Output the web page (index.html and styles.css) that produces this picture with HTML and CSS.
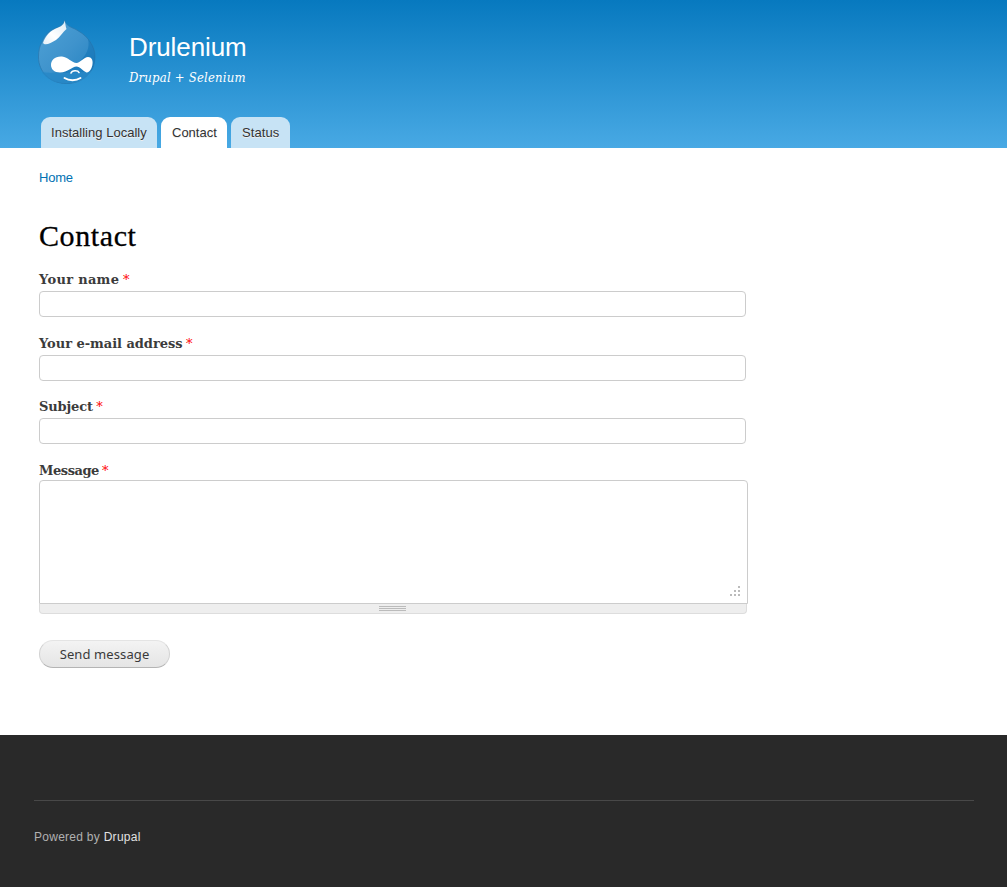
FILE: index.html
```html
<!DOCTYPE html>
<html lang="en">
<head>
<meta charset="utf-8">
<title>Contact | Drulenium</title>
<link rel="stylesheet" href="styles.css">
</head>
<body>
<header class="header">
  <div class="branding">
    <svg class="logo" width="60" height="66" viewBox="0 0 60 66" aria-label="Home">
      <defs>
        <linearGradient id="drop" x1="0" y1="0" x2="1" y2="1">
          <stop offset="0" stop-color="#4fa2d6"/>
          <stop offset=".5" stop-color="#3f93cc"/>
          <stop offset="1" stop-color="#2180c0"/>
        </linearGradient>
        <linearGradient id="shine" x1="0" y1="1" x2="1" y2="0">
          <stop offset="0" stop-color="#fff" stop-opacity=".85"/>
          <stop offset=".4" stop-color="#fff"/>
          <stop offset="1" stop-color="#fff" stop-opacity=".8"/>
        </linearGradient>
      </defs>
      <path d="M27.7 .5C29 5 33 7 38 9C43 12 47 14 51 19C56 25 58 31 58 37C58 53 45 63.5 29.5 63.5C13 63.5 1.5 52 1.5 37C1.5 31 2.5 26 5 22C8 15 12 11 17 9C23 7 26 5 27.7 .5Z" fill="url(#drop)" stroke="#2b79b0" stroke-width=".8"/>
      <path d="M51 19C56 25 58 31 58 37C58 53 45 63.5 29.5 63.5C19 63.5 10 59 5 52C20 55 33 50 42 42C50 35 53 27 51 19Z" fill="#0c70b3" opacity=".5"/>
      <path d="M4 51C10 60 19 63.5 29.5 63.5C41 63.5 50 59 55 51C45 53 15 54 4 51Z" fill="#2f92cf" opacity=".5"/>
      <path d="M27.7 .5C27 6 22 7 17 9.5C12 12 8 17 6 23C8 26 14 23 19 20C23 17 26 12 29.5 9C28.5 6 28.5 4 27.7 .5Z" fill="url(#shine)"/>
      <path d="M25 36.5C31 37 35 43 39.5 43C43 43 47 37 51 37C54.5 37 56 40 55.5 44C55 49 52 53 49.5 52.5C46 51 43 46.500 39.5 46.5C35 46.5 31 52.5 23 52.5C17 52.5 14 49 14 45C14 40 18 36 25 36.5Z" fill="#fff"/>
      <path d="M34 53C35 50 41 50 42 52.5" fill="none" stroke="#fff" stroke-width="1.6" stroke-linecap="round"/>
      <path d="M27.5 58C32 61 39 61 43.5 58" fill="none" stroke="#fff" stroke-width="1.9" stroke-linecap="round"/>
    </svg>
    <div class="titles">
      <div class="site-name">Drulenium</div>
      <div class="slogan">Drupal + Selenium</div>
    </div>
  </div>
  <nav class="tabs">
    <a class="tab tab-install">Installing Locally</a>
    <a class="tab tab-contact active">Contact</a>
    <a class="tab tab-status">Status</a>
  </nav>
</header>
<main class="main">
  <div class="breadcrumb"><a>Home</a></div>
  <h1 class="title">Contact</h1>
  <form class="form">
    <div class="field"><label class="label l-name">Your name <span class="req">*</span></label><input class="input" type="text"></div>
    <div class="field short"><label class="label l-mail">Your e-mail address <span class="req">*</span></label><input class="input" type="text"></div>
    <div class="field"><label class="label l-subject">Subject <span class="req">*</span></label><input class="input" type="text"></div>
    <div class="message"><label class="label l-message">Message <span class="req">*</span></label>
      <div class="area">
        <svg width="10" height="10" viewBox="0 0 10 10" fill="#bbb"><path d="M8 0h2v2h-2zM4 4h2v2h-2zM8 4h2v2h-2zM0 8h2v2h-2zM4 8h2v2h-2zM8 8h2v2h-2z"/></svg>
      </div>
      <div class="grippie">
        <svg width="27" height="5" viewBox="0 0 27 5" fill="#bbb"><path d="M0 0h27v1h-27zM0 2h27v1h-27zM0 4h27v1h-27z"/></svg>
      </div>
    </div>
    <button class="button" type="button">Send message</button>
  </form>
</main>
<footer class="footer">
  <div class="footer-inner">Powered by <a>Drupal</a></div>
</footer>
</body>
</html>
```
FILE: styles.css
```css
* { box-sizing: border-box; }
body { margin: 0; width: 1007px; height: 887px; overflow: hidden; background: #fff; display: flex; flex-direction: column; font-family: "Liberation Sans", Arial, sans-serif; color: #3b3b3b; }
.header { height: 148px; flex: none; padding: 20px 0 0 37px; background: linear-gradient(#0779bf, #48a9e4); display: flex; flex-direction: column; justify-content: space-between; }
.branding { display: flex; }
.logo { flex: none; }
.titles { padding: 11px 0 0 32px; color: #fff; }
.site-name { font-size: 26px; line-height: 32px; letter-spacing: -.1px; }
.slogan { margin-top: 5px; font: italic 13px/20px "DejaVu Serif Condensed", "DejaVu Serif", serif; font-stretch: condensed; letter-spacing: .2px; white-space: nowrap; }
.tabs { display: flex; gap: 4px; padding-left: 4px; }
.tab { height: 31px; padding-left: 10px; border-radius: 9px 9px 0 0; background: #c7e3f5; color: #333; font-size: 13px; line-height: 31px; text-shadow: 0 1px #eee; white-space: nowrap; }
.tab-install { width: 116px; letter-spacing: .02px; }
.tab-contact { width: 66px; padding-left: 11px; }
.tab-status { width: 59px; padding-left: 11px; letter-spacing: .1px; }
.tab.active { background: #fff; }
.main { height: 587px; flex: none; padding: 20px 0 0 39px; }
.breadcrumb { font-size: 13px; line-height: 20px; letter-spacing: -.2px; color: #0071b3; }
.title { margin: 30px 0 0; font: 30px/36px "Liberation Serif", serif; letter-spacing: .6px; color: #000; -webkit-text-stroke: .3px #000; }
.form { margin-top: 16px; }
.field { height: 64px; }
.field.short { height: 63px; }
.label { display: block; height: 21px; font: bold 13px/20px "DejaVu Serif", serif; white-space: nowrap; }
.l-name { letter-spacing: .3px; }
.l-mail { letter-spacing: -.04px; }
.l-subject { letter-spacing: -.15px; }
.l-message { height: 19px; letter-spacing: -.45px; }
.req { color: #f00; font-weight: normal; margin-left: -1px; }
.input { display: block; width: 707px; height: 26px; margin: 0; border: 1px solid #ccc; border-radius: 4px; padding: 4px; background: #fff; outline: none; }
.message { width: 709px; }
.area { height: 124px; border: 1px solid #ccc; border-radius: 4px 4px 0 0; display: flex; justify-content: flex-end; align-items: flex-end; padding: 0 7px 7px; }
.grippie { width: 708px; height: 10px; border: 1px solid #ddd; border-top: 0; border-radius: 0 0 4px 4px; background: #eee; display: flex; padding: 2px 0 0 339px; }
.button { display: block; width: 131px; height: 28px; margin: 26px 0 0; padding: 0; border: 1px solid #e4e4e4; border-bottom-color: #b4b4b4; border-left-color: #d2d2d2; border-right-color: #d2d2d2; border-radius: 14px; background: linear-gradient(#f3f3f3, #e5e5e5); color: #3a3a3a; font: 13px/24px "Noto Sans", sans-serif; letter-spacing: .1px; }
.footer { flex: 1; background: #292929; padding: 65px 33px 0 34px; }
.footer-inner { border-top: 1px solid #484848; padding-top: 26px; color: #b1b1b1; font-size: 12px; line-height: 20px; letter-spacing: .27px; }
.footer-inner a { color: #e2e2e2; }
```
